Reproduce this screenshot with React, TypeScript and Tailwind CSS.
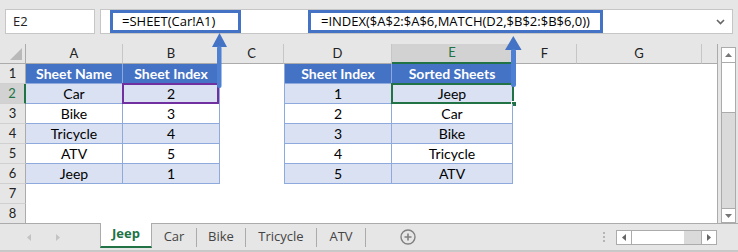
import type { ReactNode } from 'react'

type Kind = 'hdr' | 'band' | 'plain' | 'empty'

interface Cell {
  text?: string
  kind: Kind
  left?: boolean
  mark?: 'purple' | 'green'
}

const UI_FONT = "[font-family:'Open_Sans','Noto_Sans',sans-serif]"
const CELL_FONT = "[font-family:'Lato','Liberation_Sans',sans-serif]"

const t1 = [
  ['Car', '2'],
  ['Bike', '3'],
  ['Tricycle', '4'],
  ['ATV', '5'],
  ['Jeep', '1'],
]
const t2 = [
  ['1', 'Jeep'],
  ['2', 'Car'],
  ['3', 'Bike'],
  ['4', 'Tricycle'],
  ['5', 'ATV'],
]

// 8 cells per row: A..G plus the narrow strip right of G
function buildRows(): Cell[][] {
  const rows: Cell[][] = []
  rows.push([
    { kind: 'hdr', text: 'Sheet Name' },
    { kind: 'hdr', text: 'Sheet Index' },
    { kind: 'empty' },
    { kind: 'hdr', text: 'Sheet Index', left: true },
    { kind: 'hdr', text: 'Sorted Sheets' },
    { kind: 'empty' },
    { kind: 'empty' },
    { kind: 'empty' },
  ])
  for (let i = 0; i < 5; i++) {
    const k: Kind = i % 2 === 0 ? 'band' : 'plain'
    rows.push([
      { kind: k, text: t1[i][0] },
      { kind: k, text: t1[i][1], mark: i === 0 ? 'purple' : undefined },
      { kind: 'empty' },
      { kind: k, text: t2[i][0], left: true },
      { kind: k, text: t2[i][1], mark: i === 0 ? 'green' : undefined },
      { kind: 'empty' },
      { kind: 'empty' },
      { kind: 'empty' },
    ])
  }
  for (let i = 0; i < 2; i++) {
    rows.push(Array.from({ length: 8 }, () => ({ kind: 'empty' as Kind })))
  }
  return rows
}

const colLetters = ['A', 'B', 'C', 'D', 'E', 'F', 'G', '']

function DataCell({ cell }: { cell: Cell }) {
  if (cell.kind === 'empty') return <div className="bg-white" />
  const bg =
    cell.kind === 'hdr'
      ? 'bg-[#4472c4] text-white font-bold'
      : cell.kind === 'band'
        ? 'bg-[#d9e1f2] text-black'
        : 'bg-white text-black'
  return (
    <div
      className={`relative flex items-center justify-center border-r border-b border-[#8ea9db] text-[14px] ${bg} ${
        cell.left ? 'border-l' : ''
      }`}
    >
      {cell.text}
      {cell.mark === 'purple' && (
        <div className="absolute -left-px top-[-1px] right-[0px] bottom-[-1px] border-2 border-[#7030a0]" />
      )}
      {cell.mark === 'green' && (
        <>
          <div className="absolute -left-px top-[-1px] right-[-2px] bottom-[-1px] border-2 border-[#217346]" />
          <div className="absolute right-[-5px] bottom-[-4px] size-[6px] border border-white bg-[#217346]" />
        </>
      )}
    </div>
  )
}

function Tab({ children, w }: { children: ReactNode; w: string }) {
  return (
    <>
      <div className={`flex h-[26px] items-center justify-center text-[13px] text-[#444] ${w}`}>{children}</div>
      <div className="h-[19px] w-px self-center bg-[#ababab]" />
    </>
  )
}

export default function App() {
  const rows = buildRows()

  return (
    <div className={`relative flex h-[252px] w-[738px] flex-col overflow-hidden bg-[#e6e6e6] ${UI_FONT}`}>
      {/* formula bar */}
      <div className="flex h-[44px] shrink-0 items-start pt-[9px] pl-[5px]">
        <div className="flex h-[25px] w-[90px] items-center border border-[#c6c6c6] bg-white pl-[7px] text-[13px] text-[#222]">
          E2
        </div>
        <div className="ml-[5px] flex h-[25px] w-[633px] items-center border border-[#c6c6c6] bg-white text-[13px] text-black">
          <div className="ml-[9px] flex h-[23px] w-[131px] items-center border-[3px] border-[#4472c4] pl-[9px]">
            =SHEET(Car!A1)
          </div>
          <div className="ml-[67px] flex h-[23px] w-[295px] items-center border-[3px] border-[#4472c4] pl-[10px]">
            =INDEX($A$2:$A$6,MATCH(D2,$B$2:$B$6,0))
          </div>
          <svg className="ml-auto mr-[7px]" width="9" height="6" viewBox="0 0 9 6">
            <polyline points="1,1 4.5,4.5 8,1" fill="none" stroke="#666" strokeWidth="1.6" />
          </svg>
        </div>
      </div>

      {/* sheet */}
      <div className="flex h-[179px] shrink-0">
        <div
          className={`grid h-[179px] w-[718px] grid-cols-[26px_97px_97px_64px_108px_121px_64px_125px_16px] grid-rows-[20px_repeat(8,20px)] overflow-hidden border-r border-[#ababab] bg-white ${CELL_FONT}`}
        >
          {/* column headers */}
          <div className="relative border-r border-b border-[#ababab] bg-[#e6e6e6]">
            <svg className="absolute right-[3px] bottom-[3px]" width="12" height="12" viewBox="0 0 12 12">
              <polygon points="12,0 12,12 0,12" fill="#b9b9b9" />
            </svg>
          </div>
          {colLetters.map((c, i) =>
            c === 'E' ? (
              <div
                key={i}
                className="flex items-center justify-center border-r border-b-2 border-r-[#c6c6c6] border-b-[#217346] bg-[#d2d2d2] text-[13px] text-[#217346]"
              >
                {c}
              </div>
            ) : (
              <div
                key={i}
                className={`flex items-center justify-center border-b border-[#ababab] bg-[#e6e6e6] text-[13px] text-[#222] ${
                  c ? 'border-r border-r-[#c6c6c6]' : ''
                }`}
              >
                {c}
              </div>
            ),
          )}

          {rows.map((row, r) => (
            <div key={r} className="contents">
              {r === 1 ? (
                <div className="flex items-center justify-center border-r-2 border-b border-r-[#217346] border-b-[#d0d0d0] bg-[#d2d2d2] text-[13px] text-[#217346]">
                  {r + 1}
                </div>
              ) : (
                <div className="flex items-center justify-center border-r border-b border-r-[#ababab] border-b-[#d0d0d0] bg-[#e6e6e6] text-[13px] text-[#222]">
                  {r + 1}
                </div>
              )}
              {row.map((cell, c) => (
                <DataCell key={c} cell={cell} />
              ))}
            </div>
          ))}
        </div>

        {/* vertical scrollbar */}
        <div className="ml-[3px] mt-[3px] flex h-[176px] w-[15px] flex-col border border-[#ababab] bg-[#dadada]">
          <div className="flex h-[15px] items-center justify-center border-b border-[#ababab] bg-white">
            <svg width="7" height="4" viewBox="0 0 7 4">
              <polygon points="0,4 3.5,0 7,4" fill="#777" />
            </svg>
          </div>
          <div className="h-[50px] border-b border-[#ababab] bg-white" />
          <div className="flex-1" />
          <div className="flex h-[14px] items-center justify-center border-t border-[#ababab] bg-white">
            <svg width="7" height="4" viewBox="0 0 7 4">
              <polygon points="0,0 3.5,4 7,0" fill="#777" />
            </svg>
          </div>
        </div>
      </div>

      {/* sheet tabs */}
      <div className="flex h-[27px] shrink-0 items-start border-t border-[#ababab]">
        <div className="flex h-[26px] w-[100px] items-center">
          <svg className="ml-[27px]" width="4" height="7" viewBox="0 0 4 7">
            <polygon points="4,0 0,3.5 4,7" fill="#c3c3c3" />
          </svg>
          <svg className="ml-[25px]" width="4" height="7" viewBox="0 0 4 7">
            <polygon points="0,0 4,3.5 0,7" fill="#c3c3c3" />
          </svg>
        </div>
        <div className="-mt-px flex h-[25px] w-[52px] items-center justify-center border-x border-b-2 border-x-[#ababab] border-b-[#217346] bg-white pb-[1px] text-[13px] font-bold text-[#217346]">
          Jeep
        </div>
        <Tab w="w-[44px]">Car</Tab>
        <Tab w="w-[48px]">Bike</Tab>
        <Tab w="w-[70px]">Tricycle</Tab>
        <Tab w="w-[48px]">ATV</Tab>
        <svg className="ml-[34px] mt-[5px]" width="16" height="16" viewBox="0 0 16 16">
          <circle cx="8" cy="8" r="7" fill="none" stroke="#808080" strokeWidth="1.4" />
          <path d="M8 4.5v7M4.5 8h7" stroke="#808080" strokeWidth="1.6" />
        </svg>
        <div className="ml-[187px] mt-[8px] flex flex-col gap-[2px]">
          <span className="size-[2px] bg-[#b5b5b5]" />
          <span className="size-[2px] bg-[#b5b5b5]" />
          <span className="size-[2px] bg-[#b5b5b5]" />
        </div>
        {/* horizontal scrollbar */}
        <div className="ml-[11px] mt-[6px] flex h-[15px] w-[101px] border border-[#ababab] bg-[#dadada]">
          <div className="flex w-[15px] items-center justify-center border-r border-[#ababab] bg-white">
            <svg width="4" height="7" viewBox="0 0 4 7">
              <polygon points="4,0 0,3.5 4,7" fill="#666" />
            </svg>
          </div>
          <div className="w-[52px] bg-white" />
          <div className="flex-1" />
          <div className="flex w-[15px] items-center justify-center border-l border-[#ababab] bg-white">
            <svg width="4" height="7" viewBox="0 0 4 7">
              <polygon points="0,0 4,3.5 0,7" fill="#666" />
            </svg>
          </div>
        </div>
      </div>
      <div className="h-[2px] shrink-0 bg-[#c8c8c8]" />

      {/* callout arrows from formulas to cells */}
      <svg className="pointer-events-none absolute inset-0" width="738" height="252" viewBox="0 0 738 252">
        <polygon points="212,47 219.5,33 227,47" fill="#4472c4" />
        <rect x="217" y="46" width="4.5" height="42" rx="2" fill="#4d7fd2" />
        <polygon points="505,50 513.3,36 521.6,50" fill="#4472c4" />
        <rect x="511" y="49" width="5" height="38" rx="2" fill="#4d7fd2" />
      </svg>
    </div>
  )
}
